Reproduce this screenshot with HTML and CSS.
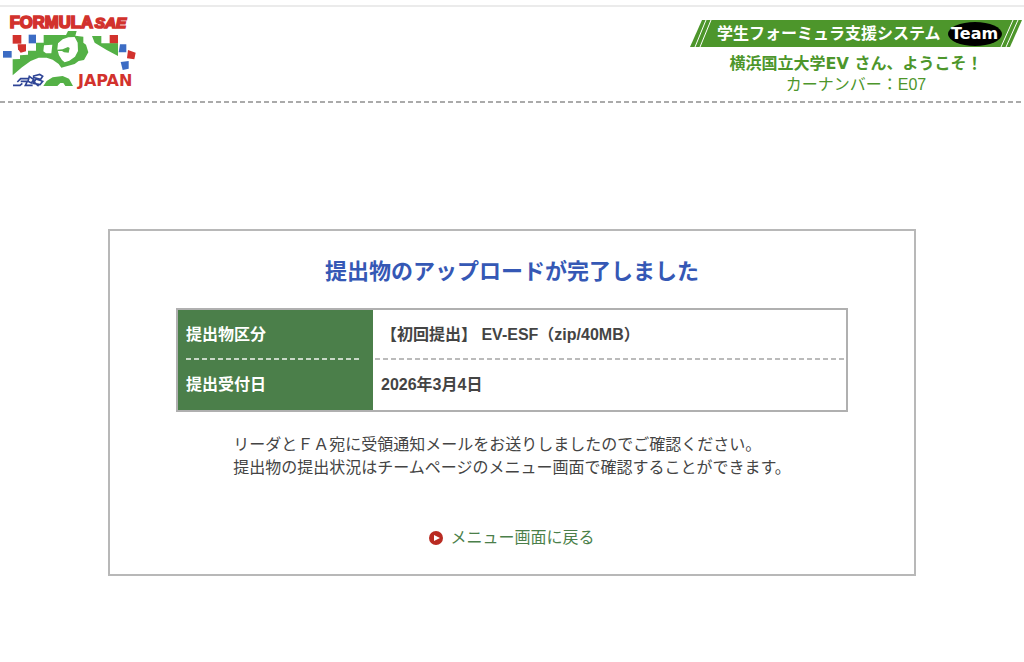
FILE: index.html
```html
<!DOCTYPE html>
<html lang="ja">
<head>
    <meta charset="UTF-8">
    <meta name="viewport" content="width=device-width, initial-scale=1.0">
    <title>学生フォーミュラ支援システム</title>
    <link rel="stylesheet" href="styles.css">
</head>
<body>
    <header class="header">
        <svg class="logo" width="140" height="78" viewBox="0 36 420 234">
            <!-- タイトル -->
            <g class="logo-red logo-title">
                <text x="29" y="83">FORMULA</text>
                <text class="logo-sae" x="284" y="83">SAE</text>
            </g>
            <!-- チェッカー -->
            <g class="logo-red">
                <path d="M38 105h26v26h-26z"/>
                <path d="M53 133h25v21l-16 4l-8-10z"/>
                <path d="M329 105h25v26h-25z"/>
                <path d="M384 150l23 8l-4 20l-22-3z"/>
            </g>
            <g class="logo-blue">
                <path d="M86 104h22v26h-22z"/>
                <path d="M9 153h26v20h-26z"/>
                <path d="M360 133h19v24h-23z"/>
                <path d="M362 186l24-3v23l-18 4z"/>
            </g>
            <!-- ドライバー -->
            <path class="logo-green" d="M131 105H198L204 93H230L226 107L250 110V128L258 134L265 157L252 180L236 183L224 192L184 203L176 192L158 179L140 173H116L92 183L66 202L38 226V178L60 177V166L84 164V152H108V128H131Z"/>
            <path class="logo-white" d="M132 136L157 134L154 160H138L130 154ZM172 148L174 130L188 118L205 112L224 111L233 128L234 153L225 170L208 182L194 187L186 180L177 166Z"/>
            <path class="logo-green" d="M171 149L188 148L204 141L209 144L206 158L192 157L186 153L172 153ZM276 108H304V130H354V168L320 150L284 128Z"/>
            <path class="logo-green" d="M130 258L140 243L158 232L188 228L207 236L219 258H196L190 249H181L172 258Z"/>
            <!-- マシン -->
            <g class="logo-car">
                <path d="M39 256H60L67 250M52 246L62 236H87M62 244H82L76 256H98"/>
                <path d="M88 229L101 239L94 249L84 244ZM101 228L119 223L128 229L122 238L101 233ZM108 237L128 244L120 254L100 250ZM98 243L116 258"/>
            </g>
            <text class="logo-red logo-japan" x="234" y="258">JAPAN</text>
        </svg>

        <div class="user">
            <svg class="banner" width="332" height="27" viewBox="0 0 332 27">
                <path class="banner-bg" d="M12 0H332L320 27H0Z"/>
                <path class="banner-line" d="M16 0L5 27M21 0L10 27M323 0L311 27M328 0L316 27"/>
                <text class="banner-text" x="27" y="19">学生フォーミュラ支援システム</text>
                <ellipse cx="285" cy="14" rx="27" ry="12"/>
                <text class="banner-team" x="261" y="19">Team</text>
            </svg>
            <p class="user-name">横浜国立大学EV さん、ようこそ！</p>
            <p class="user-number">カーナンバー：E07</p>
        </div>
    </header>

    <main class="box">
        <h1>提出物のアップロードが完了しました</h1>

        <table class="detail">
            <tr>
                <th scope="row">提出物区分</th>
                <td>【初回提出】 EV-ESF（zip/40MB）</td>
            </tr>
            <tr>
                <th scope="row">提出受付日</th>
                <td>2026年3月4日</td>
            </tr>
        </table>

        <p class="message">
            リーダとＦＡ宛に受領通知メールをお送りしましたのでご確認ください。<br>
            提出物の提出状況はチームページのメニュー画面で確認することができます。
        </p>

        <a href="#" class="back">
            <svg width="14" height="14" viewBox="0 0 14 14">
                <circle cx="7" cy="7" r="7"/>
                <path d="M5 4L11 7L5 10Z"/>
            </svg>
            メニュー画面に戻る
        </a>
    </main>
</body>
</html>
```
FILE: styles.css
```css
* { margin: 0; padding: 0; box-sizing: border-box; }
body {
    padding-top: 5px;
    font-family: "Liberation Sans", "Noto Sans CJK JP", sans-serif;
    font-size: 16px;
    color: #444;
    background-color: #fff;
}
.header {
    display: flex;
    justify-content: space-between;
    align-items: flex-start;
    padding: 5px 2px 8px 0;
    border-top: 2px solid #ebebeb;
    background: repeating-linear-gradient(to right, #aaa 0 5px, transparent 5px 8px) bottom / 100% 2px no-repeat;
}
.logo-title { font-size: 50px; font-weight: bold; stroke: #d2322d; stroke-width: 5px; }
.logo-sae { font-size: 46px; font-style: italic; }
.logo-japan { font-family: "DejaVu Sans", sans-serif; font-size: 48px; font-weight: bold; }
.logo-red { fill: #d2322d; }
.logo-blue { fill: #3c6cc4; }
.logo-green { fill: #54b146; }
.logo-white { fill: #fff; }
.logo-car { fill: none; stroke: #2f4596; stroke-width: 5px; }
.user {
    padding-top: 8px;
    text-align: center;
    line-height: 21px;
    color: #4d962b;
}
.banner { display: block; margin-bottom: 6px; }
.banner-bg { fill: #4d962b; }
.banner-line { fill: none; stroke: #fff; stroke-width: 1px; }
.banner-text {
    font-family: "Noto Sans CJK JP", sans-serif;
    font-weight: bold;
    fill: #fff;
}
.banner-team {
    font-family: "DejaVu Sans", sans-serif;
    font-weight: bold;
    fill: #fff;
}
.user-name {
    font-family: "DejaVu Sans", "Noto Sans CJK JP", sans-serif;
    font-weight: bold;
}
.box {
    margin: 126px 108px 0;
    padding: 25px 66px;
    border: 2px solid #b8b8b8;
    text-align: center;
}
h1 {
    margin-bottom: 20px;
    font-size: 22px;
    line-height: 32px;
    color: #3558b5;
}
.detail {
    width: 100%;
    border: 2px solid #b0b0b0;
    border-collapse: separate;
    border-spacing: 0;
    text-align: left;
    font-weight: bold;
    line-height: 23px;
}
.detail th, .detail td { padding: 13px 8px 14px; }
.detail th {
    width: 195px;
    color: #fff;
    background-color: #4b7f4a;
}
.detail tr:first-child th {
    background-image: repeating-linear-gradient(to right, #c9d9c8 0 5px, transparent 5px 8px);
    background-position: 8px 100%;
    background-size: 175px 2px;
    background-repeat: no-repeat;
}
.detail tr:first-child td {
    background: repeating-linear-gradient(to right, #bbb 0 5px, transparent 5px 8px) bottom / calc(100% - 4px) 2px no-repeat;
}
.message {
    display: inline-block;
    margin: 21px 0 47px;
    text-align: left;
    line-height: 23px;
}
.back {
    display: flex;
    justify-content: center;
    align-items: center;
    gap: 7px;
    line-height: 23px;
    color: #4b7f4a;
    text-decoration: none;
}
.back circle { fill: #b92b22; }
.back path { fill: #fff; }
```
